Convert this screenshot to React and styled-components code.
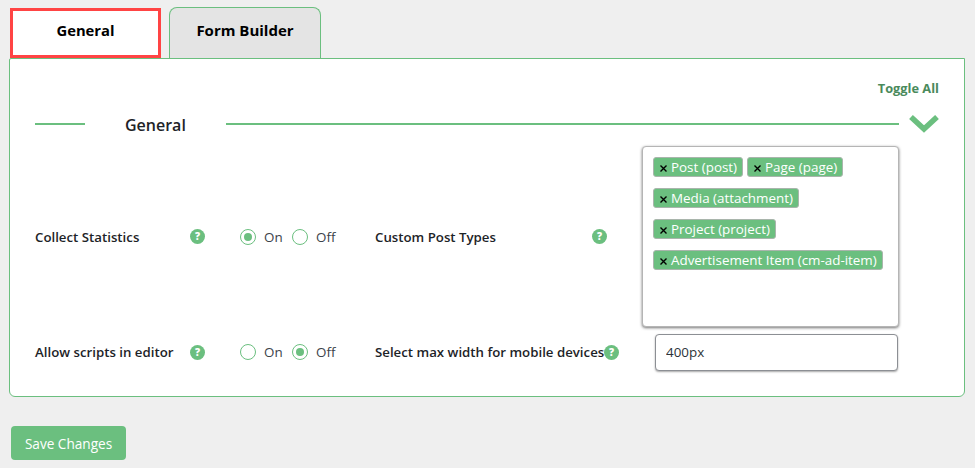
import React from 'react'
import styled, { createGlobalStyle } from 'styled-components'

const green = '#6bbf7f'

const GlobalStyle = createGlobalStyle`
  html, body { margin: 0; padding: 0; background: #efefef; }
  body { font-family: "Open Sans", "Noto Sans", "Liberation Sans", sans-serif; color: #1d2327; }
`

const Page = styled.div`
  width: 975px;
  height: 468px;
  overflow: hidden;
  padding: 7px 10px 0 9px;
  box-sizing: border-box;
`

const TabBar = styled.div`
  display: flex;
  align-items: flex-end;
  height: 51px;
  padding-left: 1px;
  gap: 8px;
`

const ActiveTab = styled.div`
  width: 151px;
  height: 50px;
  box-sizing: border-box;
  border: 3px solid #ff4444;
  background: #fff;
  color: #000;
  font-size: 14.8px;
  font-weight: 700;
  display: flex;
  align-items: center;
  justify-content: center;
  padding-bottom: 6px;
`

const Tab = styled.div`
  width: 152px;
  height: 51px;
  box-sizing: border-box;
  border: 1px solid ${green};
  border-bottom: 0;
  border-radius: 8px 8px 0 0;
  background: #e4e4e4;
  color: #000;
  font-size: 15px;
  font-weight: 700;
  display: flex;
  align-items: center;
  justify-content: center;
  padding-bottom: 6px;
`

const Panel = styled.div`
  width: 956px;
  height: 339px;
  box-sizing: border-box;
  border: 1px solid ${green};
  border-radius: 2px 0 6px 6px;
  background: #fff;
  padding: 20px 25px 0;
`

const ToggleAll = styled.div`
  text-align: right;
  font-size: 12.8px;
  font-weight: 700;
  color: #4a8a5c;
  line-height: 18px;
`

const SectionHead = styled.div`
  display: flex;
  align-items: center;
  height: 28px;
  margin-top: 13px;
`

const Rule = styled.div`
  height: 2px;
  background: ${green};
  width: ${p => p.$width}px;
  flex: ${p => (p.$width ? 'none' : 1)};
`

const SectionTitle = styled.h2`
  margin: 0;
  width: 141px;
  padding-left: 40px;
  box-sizing: border-box;
  font-size: 16px;
  font-weight: 600;
  color: #1d2327;
  position: relative;
  top: 1px;
`

const Chevron = styled.svg`
  width: 30px;
  height: 18px;
  margin-left: 10px;
  color: ${green};
`

const Row = styled.div`
  display: flex;
  align-items: center;
  height: ${p => p.$height}px;
  margin-top: ${p => p.$top}px;
`

const FieldLabel = styled.div`
  width: ${p => p.$width}px;
  flex: none;
  font-size: 13.25px;
  font-weight: 600;
  color: #1d2327;
  white-space: nowrap;
`

const HelpBadge = styled.span`
  width: 15px;
  height: 15px;
  flex: none;
  border-radius: 50%;
  background: ${green};
  color: #fff;
  font-size: 10px;
  font-weight: 800;
  line-height: 15px;
  text-align: center;
`

const Radios = styled.div`
  display: flex;
  align-items: center;
  margin-left: 35px;
  width: 135px;
  flex: none;
`

const RadioLabel = styled.label`
  display: flex;
  align-items: center;
  width: ${p => p.$width}px;
  font-size: 13.4px;
  color: #3c434a;
`

const RadioDot = styled.span`
  width: 16px;
  height: 16px;
  box-sizing: border-box;
  border: 1px solid ${green};
  border-radius: 50%;
  margin-right: 8px;
  display: flex;
  align-items: center;
  justify-content: center;

  &::after {
    content: '';
    width: 8px;
    height: 8px;
    border-radius: 50%;
    background: ${p => (p.$checked ? green : 'transparent')};
  }
`

const MultiSelect = styled.div`
  width: 257px;
  height: 181px;
  box-sizing: border-box;
  margin-left: ${p => p.$left}px;
  background: #fff;
  border: 1px solid #b5b5b5;
  border-radius: 4px;
  box-shadow: 0 1px 3px rgba(0, 0, 0, 0.55);
  padding: 10px 10px;
  display: flex;
  flex-wrap: wrap;
  align-content: flex-start;
  gap: 11px 4px;
`

const Chip = styled.span`
  height: 20px;
  box-sizing: border-box;
  border: 1px solid #a9b5ac;
  border-radius: 3px;
  background: ${green};
  color: #fff;
  font-size: 13.4px;
  line-height: 17px;
  padding: 0 5px 0 6px;
  display: inline-flex;
  align-items: center;
  white-space: nowrap;
`

const ChipClose = styled.svg`
  width: 7px;
  height: 7px;
  margin: 3px 4px 0 0;
  color: #000;
`

const TextInput = styled.input`
  width: 243px;
  height: 37px;
  box-sizing: border-box;
  margin-left: ${p => p.$left}px;
  border: 1px solid #8c8f94;
  border-radius: 4px;
  box-shadow: 0 1px 2px rgba(0, 0, 0, 0.35);
  padding: 0 10px;
  font: inherit;
  font-size: 13.4px;
  color: #2c3338;
  outline: none;
`

const SaveButton = styled.button`
  display: block;
  margin: 29px 0 0 2px;
  width: 115px;
  height: 34px;
  border: 0;
  border-radius: 4px;
  background: ${green};
  color: #fff;
  font: inherit;
  font-size: 13.6px;
`

const postTypes = [
  'Post (post)',
  'Page (page)',
  'Media (attachment)',
  'Project (project)',
  'Advertisement Item (cm-ad-item)',
]

const Toggle = ({ on }) => (
  <Radios>
    <RadioLabel $width={52}><RadioDot $checked={on} />On</RadioLabel>
    <RadioLabel $width={52}><RadioDot $checked={!on} />Off</RadioLabel>
  </Radios>
)

const App = () => {
  return (
    <>
      <GlobalStyle />
      <Page>
        <TabBar>
          <ActiveTab>General</ActiveTab>
          <Tab>Form Builder</Tab>
        </TabBar>
        <Panel>
          <ToggleAll>Toggle All</ToggleAll>
          <SectionHead>
            <Rule $width={50} />
            <SectionTitle>General</SectionTitle>
            <Rule />
            <Chevron viewBox="0 0 30 18">
              <path d="M2 2 L15 14 L28 2" fill="none" stroke="currentColor" strokeWidth="5.5" />
            </Chevron>
          </SectionHead>
          <Row $height={181} $top={8}>
            <FieldLabel $width={155}>Collect Statistics</FieldLabel>
            <HelpBadge>?</HelpBadge>
            <Toggle on />
            <FieldLabel $width={217}>Custom Post Types</FieldLabel>
            <HelpBadge>?</HelpBadge>
            <MultiSelect $left={35}>
              {postTypes.map(type => (
                <Chip key={type}>
                  <ChipClose viewBox="0 0 7 7">
                    <path d="M0.5 0.5 L6.5 6.5 M6.5 0.5 L0.5 6.5" stroke="currentColor" strokeWidth="1.4" />
                  </ChipClose>
                  {type}
                </Chip>
              ))}
            </MultiSelect>
          </Row>
          <Row $height={38} $top={6}>
            <FieldLabel $width={155}>Allow scripts in editor</FieldLabel>
            <HelpBadge>?</HelpBadge>
            <Toggle on={false} />
            <FieldLabel $width={229}>Select max width for mobile devices</FieldLabel>
            <HelpBadge>?</HelpBadge>
            <TextInput $left={36} defaultValue="400px" />
          </Row>
        </Panel>
        <SaveButton>Save Changes</SaveButton>
      </Page>
    </>
  )
}

export default App
